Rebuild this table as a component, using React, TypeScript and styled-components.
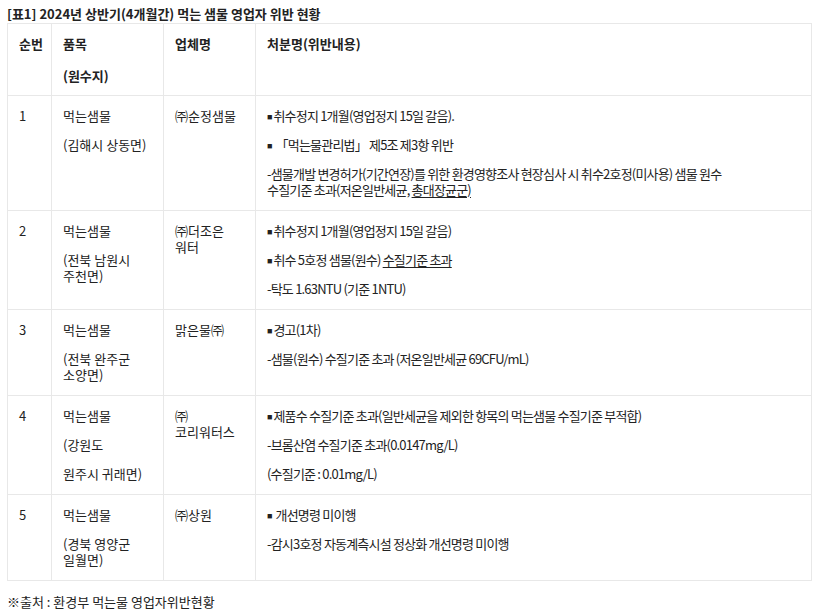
import React from "react";
import styled, { createGlobalStyle } from "styled-components";

const Global = createGlobalStyle`
  html, body { margin: 0; padding: 0; background: #ffffff; }
  body {
    font-family: "Noto Sans CJK KR", "Noto Sans", sans-serif;
    color: #222222;
    font-size: 13px;
  }
`;

const Page = styled.div`
  width: 804px;
  padding: 5px 8px 0 7px;
`;

const Title = styled.h3`
  margin: 0;
  font-size: 13px;
  line-height: 18px;
  font-weight: 700;
  color: #222;
`;

const Table = styled.table`
  width: 804px;
  border-collapse: collapse;
  table-layout: fixed;
`;

const HeadCell = styled.th<{ $w: number }>`
  box-sizing: border-box;
  width: ${(p) => p.$w}px;
  border: 1px solid #e8e8e8;
  padding: 12px 8px 11px 11px;
  text-align: left;
  vertical-align: top;
  font-weight: 700;
`;

const Cell = styled.td<{ $tight?: boolean }>`
  box-sizing: border-box;
  border: 1px solid #e8e8e8;
  padding: 12px 8px 12px 11px;
  text-align: left;
  vertical-align: top;
  letter-spacing: ${(p) => (p.$tight ? "-0.8px" : "normal")};
`;

const Para = styled.p<{ $head?: boolean; $extra?: boolean }>`
  margin: ${(p) => (p.$extra ? 4 : 0)}px 0 ${(p) => (p.$head ? 16 : 13)}px;
  line-height: 16px;
  font-size: 13px;
  white-space: nowrap;
  &:last-child { margin-bottom: 0; }
`;

const Bullet = styled.span`
  font-family: "Liberation Sans", "DejaVu Sans", sans-serif;
  font-size: 9px;
  line-height: 1;
  letter-spacing: 0;
  vertical-align: 1px;
  margin-right: 1px;
`;

const U = styled.span`
  text-decoration: underline;
  text-underline-offset: 2px;
`;

const Source = styled.p`
  margin: 13px 0 0;
  font-size: 13px;
  line-height: 16px;
`;

type Row = { no: string; item: React.ReactNode[]; company: React.ReactNode[]; action: React.ReactNode[]; extraAt?: number };

const B = () => <Bullet>■</Bullet>;

const rows: Row[] = [
  {
    no: "1",
    item: ["먹는샘물", "(김해시 상동면)"],
    company: ["㈜순정샘물"],
    extraAt: 2,
    action: [
      <><B />취수정지 1개월(영업정지 15일 갈음).</>,
      <><B /> 「먹는물관리법」 제5조 제3항 위반</>,
      <>
        -샘물개발 변경허가(기간연장)를 위한 환경영향조사 현장심사 시 취수2호정(미사용) 샘물 원수
        <br />
        수질기준 초과(저온일반세균, <U>총대장균군)</U>
      </>,
    ],
  },
  {
    no: "2",
    item: ["먹는샘물", <>(전북 남원시<br />주천면)</>],
    company: [<>㈜더조은<br />워터</>],
    action: [
      <><B />취수정지 1개월(영업정지 15일 갈음)</>,
      <><B />취수 5호정 샘물(원수) <U>수질기준 초과</U></>,
      "-탁도 1.63NTU (기준 1NTU)",
    ],
  },
  {
    no: "3",
    item: ["먹는샘물", <>(전북 완주군<br />소양면)</>],
    company: ["맑은물㈜"],
    action: [<><B />경고(1차)</>, "-샘물(원수) 수질기준 초과 (저온일반세균 69CFU/mL)"],
  },
  {
    no: "4",
    item: ["먹는샘물", "(강원도", "원주시 귀래면)"],
    company: [<>㈜<br />코리워터스</>],
    action: [
      <><B />제품수 수질기준 초과(일반세균을 제외한 항목의 먹는샘물 수질기준 부적합)</>,
      "-브롬산염 수질기준 초과(0.0147mg/L)",
      "(수질기준 : 0.01mg/L)",
    ],
  },
  {
    no: "5",
    item: ["먹는샘물", <>(경북 영양군<br />일월면)</>],
    company: ["㈜상원"],
    action: [<><B /> 개선명령 미이행</>, "-감시3호정 자동계측시설 정상화 개선명령 미이행"],
  },
];

const paras = (list: React.ReactNode[], extraAt?: number) =>
  list.map((c, i) => (
    <Para key={i} $extra={i === extraAt}>
      {c}
    </Para>
  ));

export default function App() {
  return (
    <Page>
      <Global />
      <Title>[표1] 2024년 상반기(4개월간) 먹는 샘물 영업자 위반 현황</Title>
      <Table>
        <thead>
          <tr>
            <HeadCell $w={44}><Para $head>순번</Para></HeadCell>
            <HeadCell $w={112}>
              <Para $head>품목</Para>
              <Para $head>(원수지)</Para>
            </HeadCell>
            <HeadCell $w={92}><Para $head>업체명</Para></HeadCell>
            <HeadCell $w={556}><Para $head>처분명(위반내용)</Para></HeadCell>
          </tr>
        </thead>
        <tbody>
          {rows.map((r) => (
            <tr key={r.no}>
              <Cell><Para>{r.no}</Para></Cell>
              <Cell>{paras(r.item)}</Cell>
              <Cell>{paras(r.company)}</Cell>
              <Cell $tight>{paras(r.action, r.extraAt)}</Cell>
            </tr>
          ))}
        </tbody>
      </Table>
      <Source>※출처 : 환경부 먹는물 영업자위반현황</Source>
    </Page>
  );
}
